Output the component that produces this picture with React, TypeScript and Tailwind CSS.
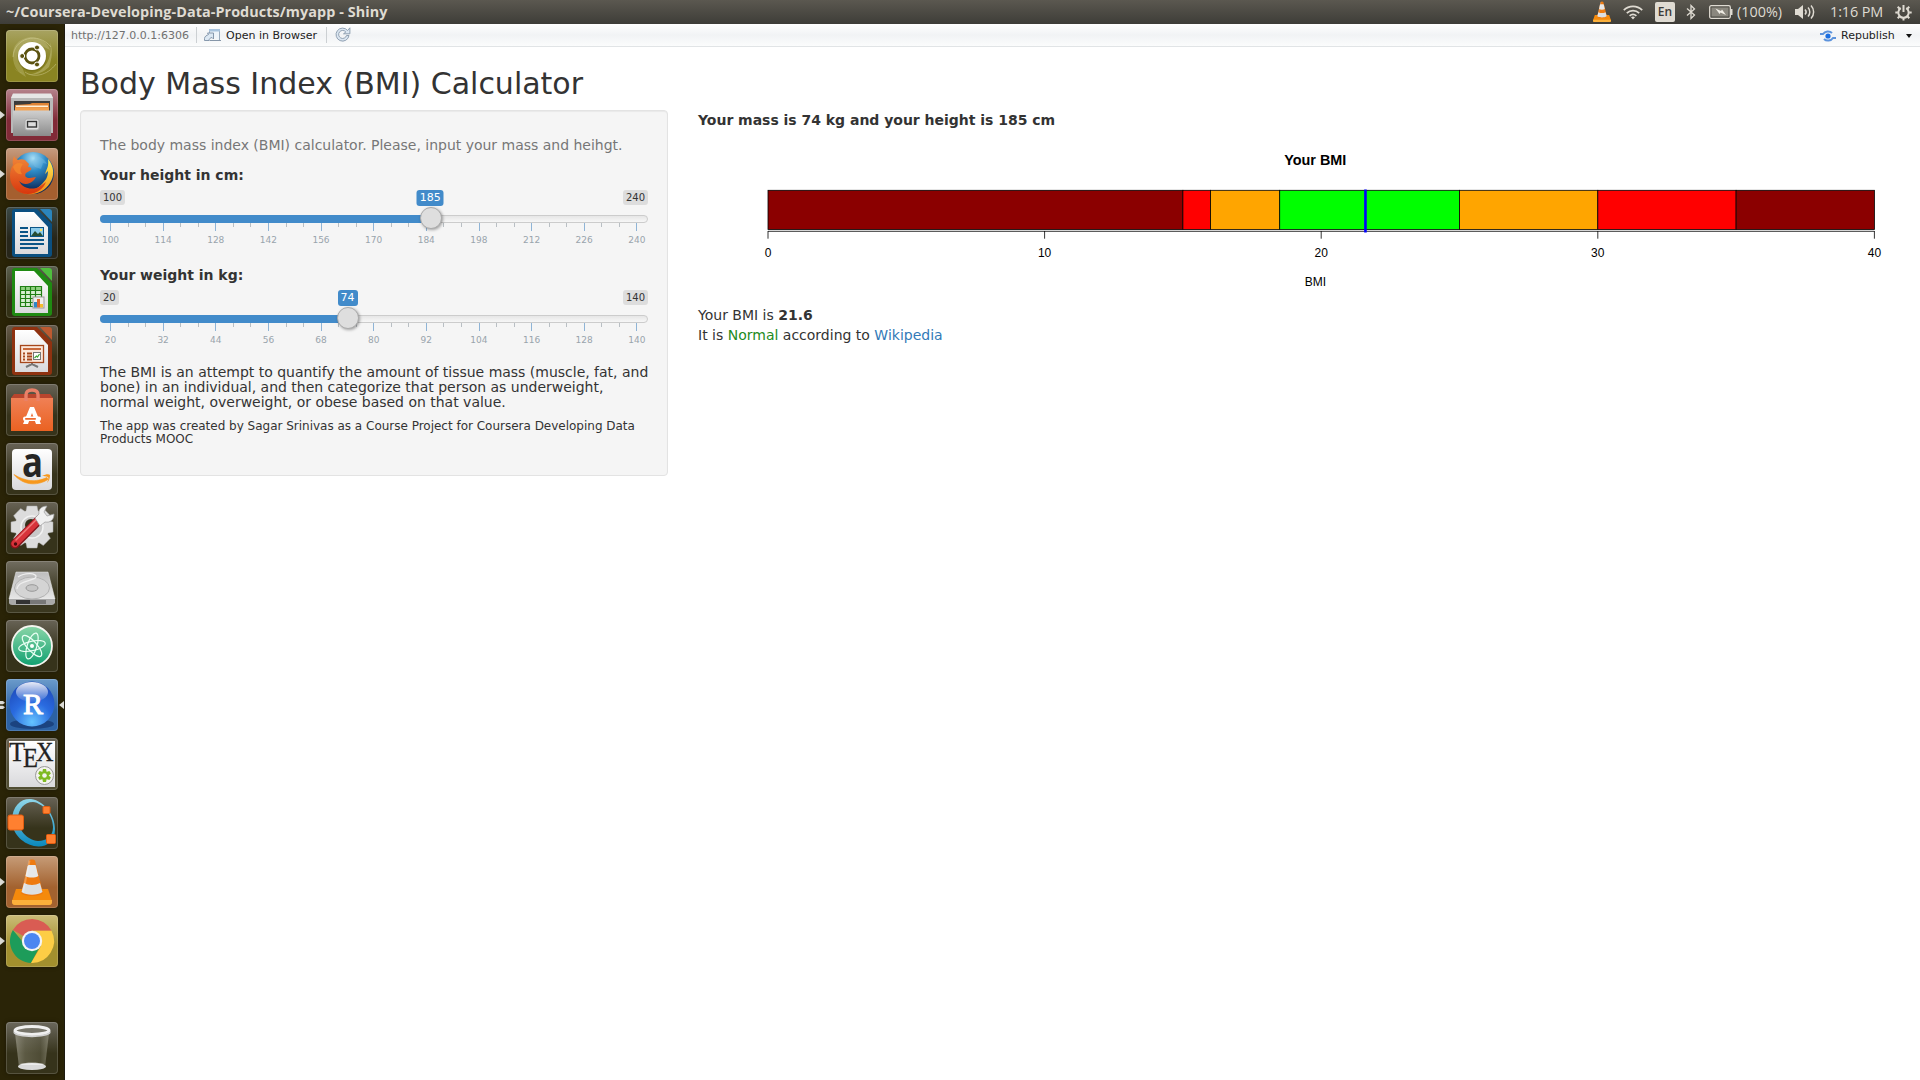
import type { ReactNode } from "react";

const tiles: { id: string; top: string; bottom: string; running?: boolean; active?: boolean; art: ReactNode }[] = [
  {
    id: "dash", top: "#a8a362", bottom: "#8a8422",
    art: (
      <>
        <path d="M7 27C8 8 32 1 45 17" stroke="#d9d59a" strokeOpacity=".5" strokeWidth="1" fill="none" />
        <path d="M7 27C6 16 12 9 24 7c10 0 18 6 20 13L26 11 12 27l8 20C12 43 7 36 7 27Z" fill="#d2ce96" fillOpacity=".3" />
        <path d="M44 12c3 14-4 29-18 32-7 1-14-1-18-6 8 8 24 10 35-1 3-8 4-17 1-25Z" fill="#e0dca8" fillOpacity=".35" />
        <path d="M19 42c8 6 22 4 31-8" stroke="#dcd8a0" strokeOpacity=".45" fill="none" />
        <circle cx="26" cy="27" r="14.5" fill="#5f5a12" fillOpacity=".35" />
        <circle cx="26" cy="26" r="14" fill="#fff" />
        <circle cx="26" cy="26" r="7" fill="none" stroke="#5b5210" strokeWidth="2.8" />
        <circle cx="16.2" cy="26" r="2.500" fill="#5b5210" stroke="#fff" strokeWidth="1" />
        <circle cx="31" cy="17.5" r="2.500" fill="#5b5210" stroke="#fff" strokeWidth="1" />
        <circle cx="31" cy="34.5" r="2.500" fill="#5b5210" stroke="#fff" strokeWidth="1" />
      </>
    ),
  },
  {
    id: "files", top: "#b5838c", bottom: "#812a37", running: true,
    art: (
      <>
        <path d="M7 5 45 5l2 4v35H5V9Z" fill="#b9b9b9" />
        <path d="M7 4.5h38l2 4.5H5Z" fill="#e6e6e6" />
        <rect x="8" y="12" width="36" height="12" fill="#3b3b3b" />
        <path d="M9 16l15-1 2-1h17v9H9Z" fill="#e08436" />
        <rect x="10" y="16.5" width="32" height="1.6" fill="#fff0d8" />
        <rect x="9" y="18.5" width="34" height="4" fill="#f3a150" />
        <rect x="7" y="21.5" width="38" height="25.5" fill="url(#steel)" />
        <rect x="19" y="30" width="14" height="11" rx="2" fill="#e3e3e3" stroke="#aaa" />
        <rect x="21.5" y="32.5" width="9" height="5.5" fill="#ddd" stroke="#333" strokeWidth="1.4" />
      </>
    ),
  },
  {
    id: "firefox", top: "#c69c80", bottom: "#a55f2f", running: true,
    art: (
      <>
        <circle cx="27" cy="25" r="21" fill="url(#foxglobe)" />
        <path d="M29 8c7 1 10 4 12 8l-4-1-2 6-6-2-3-5 3-3Z" fill="#7ec2e8" fillOpacity=".35" />
        <path d="M42 11c6 7 7 17 2 24-7 12-24 15-34 6 9 5 20 1 25-4 5-5 7-8 7-14l-3 3c2-6 4-8 3-15Z" fill="url(#foxtail)" />
        <path d="M8 8c1 2 2 3 4 4 2-1 5-1 7 0l4 4-1 3c3 0 4 1 3 3l-5 3c-2 3 0 5 4 5l6-1-2 3c-5 5-11 5-15 1 4 8 13 9 20 6l7-5c-2 6-9 12-18 12C11 46 4 38 4 28c0-5 1-8 3-11-1-3 0-6 1-9Z" fill="url(#fox)" />
        <path d="M7 19c2-4 6-5 10-3-2 3-4 6-1 10-4 1-7-2-9-7Z" fill="#f68b2c" fillOpacity=".7" />
      </>
    ),
  },
  { id: "writer", top: "#3c4a48", bottom: "#27261a", art: <OfficeDoc color="#0b4f80" fold="#2b85bd" kind="writer" /> },
  { id: "calc", top: "#5c6050", bottom: "#333116", art: <OfficeDoc color="#1f8a12" fold="#4fbe3e" kind="calc" /> },
  { id: "impress", top: "#665c4d", bottom: "#3a3218", art: <OfficeDoc color="#8f3210" fold="#bd5a30" kind="impress" /> },
  {
    id: "software", top: "#686356", bottom: "#36331b",
    art: (
      <>
        <path d="M5 14 8 10h36l3 4v5H5Z" fill="#b8452d" />
        <path d="M5 14h42v33H5Z" fill="url(#bag)" />
        <path d="M20 17v-6c0-3 2-5 6-5s6 2 6 5v6" fill="none" stroke="#e98168" strokeWidth="3.4" />
        <path d="m17 40 7-17h4l7 17h-5l-4-11-4 11Z" fill="#fff" />
        <rect x="17" y="32.5" width="18" height="4.6" rx="2" fill="#fff" />
        <rect x="19" y="34" width="11" height="1.8" rx=".8" fill="#ee6a2f" />
      </>
    ),
  },
  {
    id: "amazon", top: "#686356", bottom: "#36331b",
    art: (
      <>
        <rect x="6" y="6" width="40" height="41" rx="4" fill="url(#paper)" />
        <text x="16" y="33.500" textLength="21" lengthAdjust="spacingAndGlyphs" fontFamily="Open Sans, sans-serif" fontWeight="700" fontSize="41" fill="#252525">a</text>
        <path d="M8 31.500c11 7 22 8 33 3l1 2c-12 7.500-26 5-34-5Z" fill="#f7981d" stroke="#f7981d" strokeWidth=".6" />
        <path d="M36 33c4-2 7-2 8-1 0 3-1 6-3 8 1-3 2-5 1-6-2-1-4-1-6-1Z" fill="#f7981d" />
      </>
    ),
  },
  {
    id: "settings", top: "#686356", bottom: "#36331b",
    art: (
      <>
        <g fill="#dcdcdc" stroke="#aaa" strokeWidth=".5">
          {[0, 45, 90, 135, 180, 225, 270, 315].map((a) => (
            <path key={a} d="m21 4 10 0 1.5 7h-13Z" transform={`rotate(${a} 26 25)`} />
          ))}
          <circle cx="26" cy="25" r="17" stroke="none" />
        </g>
        <circle cx="26" cy="25" r="11" fill="#c8c8c8" stroke="#f2f2f2" strokeWidth="1.5" />
        <circle cx="25" cy="23" r="6" fill="#34301a" />
        <path d="M9 42 33 18" stroke="#86141a" strokeWidth="9" strokeLinecap="round" />
        <path d="M9 41.500 32.500 18" stroke="#d7323a" strokeWidth="7" strokeLinecap="round" />
        <path d="M10 38 31 17" stroke="#f07c7c" strokeWidth="1.5" strokeLinecap="round" />
        <circle cx="9.500" cy="42" r="1.700" fill="#4a0a0d" />
        <path d="M29 16l4-4c-1-5 3-8 8-8l-3 6 3 4 7-2c0 6-4 9-9 8l-5 4Z" fill="#f0f0f0" stroke="#9b9b9b" strokeWidth=".7" />
      </>
    ),
  },
  {
    id: "disk", top: "#716d60", bottom: "#3a371f",
    art: (
      <>
        <path d="M10 11h32l7 27H3Z" fill="url(#disk)" stroke="#eee" strokeWidth=".5" />
        <path d="M3 38h46v4c-1 1-2 2-3 2H6c-1 0-3-1-3-2Z" fill="#a9a9a9" />
        <rect x="10" y="39" width="30" height="4" fill="#333" />
        <rect x="24" y="39" width="16" height="4" fill="#777" />
        <ellipse cx="26" cy="27" rx="17.500" ry="11" fill="#d4d4d4" stroke="#b2b2b2" />
        <path d="M12 16c7-5 19-4 18 0s-18 3-19 12" fill="none" stroke="#eee" strokeWidth="1.2" />
        <ellipse cx="26" cy="27" rx="6" ry="3.300" fill="#c5c5c5" stroke="#999" />
      </>
    ),
  },
  {
    id: "atom", top: "#686356", bottom: "#36331b",
    art: (
      <>
        <circle cx="26" cy="26" r="20" fill="url(#atom)" stroke="#f5f5f0" strokeWidth="1.8" />
        <g fill="none" stroke="#e8fff3" strokeWidth="1.2">
          <ellipse cx="26" cy="26" rx="13.500" ry="4.800" transform="rotate(-12 26 26)" />
          <ellipse cx="26" cy="26" rx="13.500" ry="4.800" transform="rotate(48 26 26)" />
          <ellipse cx="26" cy="26" rx="13.500" ry="4.800" transform="rotate(108 26 26)" />
        </g>
        <circle cx="26" cy="26" r="2" fill="#fff" />
      </>
    ),
  },
  {
    id: "rstudio", top: "#6b9bcb", bottom: "#2c62a4", running: true, active: true,
    art: (
      <>
        <ellipse cx="26" cy="45" rx="22" ry="5" fill="#163a73" fillOpacity=".75" />
        <circle cx="26" cy="25" r="22.500" fill="url(#rball)" />
        <ellipse cx="26" cy="13" rx="16" ry="10" fill="url(#shine)" />
        <text x="27" y="34.500" textAnchor="middle" fontFamily="Liberation Serif, serif" fontWeight="400" stroke="#fff" strokeWidth=".9" fontSize="30" fill="#fff">R</text>
      </>
    ),
  },
  {
    id: "tex", top: "#686356", bottom: "#514e34",
    art: (
      <>
        <rect x="3" y="3" width="46" height="46" fill="url(#paper)" />
        <g fontFamily="Liberation Serif, serif" fill="#222" stroke="#222" strokeWidth=".3">
          <text x="3" y="22.500" fontSize="27" textLength="16" lengthAdjust="spacingAndGlyphs">T</text>
          <text x="17" y="28.500" fontSize="27" textLength="15" lengthAdjust="spacingAndGlyphs">E</text>
          <text x="30" y="22.500" fontSize="27" textLength="17.500" lengthAdjust="spacingAndGlyphs">X</text>
        </g>
        <circle cx="38.500" cy="37.500" r="9" fill="#f3f3ee" stroke="#999" />
        <g fill="#7fba22">
          {[0, 60, 120].map((a) => (
            <path key={a} d="M37 31h3l1.500 6.500L40 44h-3l-1.500-6.500Z" transform={`rotate(${a} 38.500 37.500)`} />
          ))}
        </g>
        <circle cx="38.500" cy="37.500" r="2.300" fill="#f3f3ee" />
      </>
    ),
  },
  {
    id: "octave", top: "#686356", bottom: "#36331b",
    art: (
      <>
        <path fillRule="evenodd" d="M6 24C6 8 16 1 25 2c14 2 24 17 24 30 0 14-10 19-21 17C15 46 6 35 6 24Zm6-4c-1 12 9 23 20 24 9 0 15-5 15-14C47 18 37 6 27 5 18 5 13 12 12 20Z" fill="url(#octave)" />
        <rect x="2" y="18" width="15.500" height="15" rx="2" fill="#ff8030" stroke="#e25c10" />
        <rect x="37" y="9.500" width="7" height="7" rx="1" fill="#ff8030" stroke="#e25c10" />
        <rect x="40.500" y="37.500" width="9" height="9" rx="1" fill="#ff8030" stroke="#e25c10" />
      </>
    ),
  },
  { id: "vlc", top: "#c69c78", bottom: "#a3622f", running: true, art: <Cone /> },
  {
    id: "chrome", top: "#cbbd78", bottom: "#a3902e", running: true,
    art: (
      <>
        <path d="M26 26 6.900 15A22 22 0 0 1 45.500 15.800L26 15.800Z" fill="#d95c53" />
        <path d="M26 26h-10L6.900 15A22 22 0 0 0 25 48l9-17Z" fill="#1d9c5a" />
        <path d="M26 15.800h19.500A22 22 0 0 1 25 48l10-17Z" fill="#fdcd45" />
        <circle cx="26" cy="26" r="10.200" fill="#f4f4f4" />
        <circle cx="26" cy="26" r="8" fill="#4c86f0" />
      </>
    ),
  },
];

function OfficeDoc({ color, fold, kind }: { color: string; fold: string; kind: "writer" | "calc" | "impress" }) {
  return (
    <>
      <path d="M9 2h22l15 15v30a3 3 0 0 1-3 3H9a3 3 0 0 1-3-3V5a3 3 0 0 1 3-3Z" fill={color} />
      <path d="M34 2h9a3 3 0 0 1 3 3v10Z" fill={fold} />
      <path d="M9 5h19l14 15v27H9Z" fill="url(#paper)" />
      {kind === "writer" && (
        <>
          <g fill="#0b5587">
            <rect x="14" y="20" width="8" height="2" /><rect x="14" y="24" width="8" height="2" /><rect x="14" y="28" width="8" height="2" />
            <rect x="14" y="32" width="24" height="2" /><rect x="14" y="36" width="24" height="2" /><rect x="14" y="40" width="18" height="2" />
            <rect x="24" y="20" width="14" height="10" />
          </g>
          <rect x="25" y="21" width="12" height="8" fill="#8ccbea" />
          <path d="m25 29 4-5 3 3 2-2 3 4Z" fill="#274d33" />
          <circle cx="35" cy="23" r="1.200" fill="#ffe05a" />
        </>
      )}
      {kind === "calc" && (
        <>
          <rect x="14" y="20" width="22" height="21" fill="#d8efd2" />
          <path d="M14 20h22v4H14Z" fill="#8fd080" />
          <path d="M14.500 20.500h21v20h-21Zm0 4h21m-21 4h21m-21 4h21m-21 4h21M19.500 20v21m5-21v21m5-21v21" fill="none" stroke="#1f7f14" strokeWidth="1.200" />
          <rect x="27" y="31" width="11" height="11" fill="#eee" stroke="#999" />
          <rect x="28" y="36" width="3" height="5.500" fill="#2e86c8" /><rect x="31" y="33" width="3" height="8.500" fill="#e0662d" /><rect x="34" y="38" width="3" height="3.500" fill="#f4bd2f" />
        </>
      )}
      {kind === "impress" && (
        <>
          <path d="m20 42 6-3 6 3m-6-4v2" fill="none" stroke="#777" strokeWidth="2" />
          <rect x="14.500" y="20.500" width="23" height="17" fill="#fbe7da" stroke="#a6471c" strokeWidth="1.300" />
          <rect x="17" y="23" width="18" height="2" fill="#c8693c" />
          <path d="M17 28.500h2m-2 3h2m-2 3h2m2-6h5m-5 3h5m-5 3h5" stroke="#a6471c" strokeWidth="1.800" />
          <rect x="27.500" y="27.500" width="7" height="7" fill="#fff" stroke="#777" />
          <path d="m28.500 33 2-2 1 1 2-3" fill="none" stroke="#3fa535" strokeWidth="1.200" />
        </>
      )}
    </>
  );
}

function Cone() {
  return (
    <>
      <path d="M10 33h32l4 12c0 2-1 4-3 4H9c-2 0-3-2-3-4Z" fill="#f58a0c" />
      <path d="M6 44h40v2c0 2-1 3-3 3H9c-2 0-3-1-3-3Z" fill="#fbb03b" />
      <path d="M23 4.500c1-1.500 5-1.500 6 0L37 37c-3 4-19 4-22 0Z" fill="#ee7a10" />
      <path d="m21.500 10.500 1-1.500h7l.5 1.500 2.300 9.500c-3 2-10 2-12.800 0Z" fill="#e6e8ea" />
      <path d="m18 27c5 2.500 11 2.500 16 0l2.500 9c-5 3.500-16 3.500-21 0Z" fill="#dcdfe2" />
      <path d="M23.500 4.500 17 36" stroke="#fff" strokeOpacity=".25" strokeWidth="2" />
    </>
  );
}

function Defs() {
  const lin: [string, string, string][] = [
    ["steel", "#d0d0d0", "#8b8b8b"], ["foxtail", "#fff05a", "#f08a14"], ["fox", "#f0873a", "#d8370d"],
    ["bag", "#f08055", "#ea6222"], ["paper", "#ffffff", "#d9d9dc"], ["disk", "#bdbdbd", "#e6e6e6"],
    ["atom", "#8ad6a8", "#10a070"], ["octave", "#8fd6ea", "#0a88bd"],
  ];
  return (
    <svg width="0" height="0" className="absolute">
      <defs>
        {lin.map(([id, a, b]) => (
          <linearGradient key={id} id={id} x1="0" y1="0" x2="0" y2="1">
            <stop offset="0" stopColor={a} /><stop offset="1" stopColor={b} />
          </linearGradient>
        ))}
        <linearGradient id="shine" x1="0" y1="0" x2="0" y2="1">
          <stop offset="0" stopColor="#fff" stopOpacity=".9" /><stop offset="1" stopColor="#fff" stopOpacity=".05" />
        </linearGradient>
        <linearGradient id="glass" x1="0" y1="0" x2="1" y2="0">
          <stop offset="0" stopColor="#b9b7a8" stopOpacity=".55" /><stop offset=".3" stopColor="#8a8874" stopOpacity=".45" />
          <stop offset=".75" stopColor="#6c6a55" stopOpacity=".45" /><stop offset="1" stopColor="#aaa896" stopOpacity=".55" />
        </linearGradient>
        <radialGradient id="foxglobe" cx=".5" cy=".15" r=".75">
          <stop offset="0" stopColor="#a8def5" /><stop offset=".4" stopColor="#2f8cc8" /><stop offset="1" stopColor="#0c2c5c" />
        </radialGradient>
        <radialGradient id="rball" cx=".5" cy=".9" r=".9">
          <stop offset="0" stopColor="#64c4ff" /><stop offset=".5" stopColor="#2a6be0" /><stop offset="1" stopColor="#1d49b8" />
        </radialGradient>
      </defs>
    </svg>
  );
}

function Tile({ top, bottom, children }: { top: string; bottom: string; children: ReactNode }) {
  return (
    <div
      className="size-[52px] overflow-hidden rounded-[4px] shadow-[inset_0_0_0_1px_rgba(255,255,255,0.16),0_0_4px_rgba(0,0,0,0.35)]"
      style={{ backgroundImage: `linear-gradient(${top}, ${bottom} 60%, ${bottom})` }}
    >
      <svg width="52" height="52" viewBox="0 0 52 52">{children}</svg>
    </div>
  );
}

function Launcher() {
  return (
    <nav className="flex w-[65px] shrink-0 flex-col justify-between border-r border-[#1d1a10] bg-[#2a2407] pt-[6px] pb-[6px]">
      <div className="flex flex-col gap-[7px]">
        {tiles.map((t) => (
          <div key={t.id} className="flex h-[52px] items-center">
            <span className="flex w-[6px] shrink-0 items-center">
              {t.running && !t.active && <svg width="5" height="8" viewBox="0 0 5 8"><path d="M0 0 5 4 0 8Z" fill="#dcdcd6" /></svg>}
              {t.active && <svg width="5" height="8" viewBox="0 0 5 8"><path d="M0 0h3l2 1.700-2 1.600H0Zm0 4.700h3l2 1.600L3 8H0Z" fill="#dcdcd6" /></svg>}
            </span>
            <Tile top={t.top} bottom={t.bottom}>{t.art}</Tile>
            {t.active && <svg className="ml-[1px]" width="5" height="8" viewBox="0 0 5 8"><path d="M5 0 0 4l5 4Z" fill="#dcdcd6" /></svg>}
          </div>
        ))}
      </div>
      <div className="pl-[6px]">
        <Tile top="#6b685d" bottom="#36331b">
          <path d="M9 11h34l-4 34c-1 4-25 4-26 0Z" fill="url(#glass)" />
          <ellipse cx="26" cy="44.500" rx="14" ry="3.500" fill="#d9d9d9" />
          <path d="M14 42c6-2 18-2 24 0l-1 1H15Z" fill="#fff" fillOpacity=".5" />
          <ellipse cx="26" cy="8.500" rx="17" ry="4" fill="#77756a" stroke="#efefef" strokeWidth="3" />
          <path d="M7.500 9c3 6 34 6 37 0v2c-3 5.500-34 5.500-37 0Z" fill="#d2d2d2" />
        </Tile>
      </div>
    </nav>
  );
}

function TopBar() {
  return (
    <header className="flex h-6 shrink-0 items-center justify-between bg-linear-to-b from-[#5b5850] to-[#3e3d38] pr-2 pl-[6px] font-['Open_Sans','Noto_Sans',sans-serif] text-[15px] text-[#dfdbd2]">
      <span className="text-[14.4px] leading-6 font-bold tracking-[0.07px] whitespace-nowrap">~/Coursera-Developing-Data-Products/myapp - Shiny</span>
      <div className="flex h-6 items-center">
        <svg width="20" height="22" viewBox="4 2 44 49"><Cone /></svg>
        <svg className="ml-[11px]" width="20" height="15" viewBox="0 0 20 15" fill="none" stroke="#dfdbd2" strokeWidth="1.700">
          <path d="M.8 5.200c5-5 13.400-5 18.400 0M3.800 8.200c3.400-3.400 9-3.400 12.400 0M6.600 10.900c2-1.900 4.800-1.900 6.800 0" />
          <path d="m10 14.500-2-2.300c1-.9 3-.9 4 0Z" fill="#dfdbd2" stroke="none" />
        </svg>
        <span className="ml-[12px] flex size-5 items-center justify-center rounded-[2px] bg-[#dfdbd2] text-[12px] leading-5 font-semibold text-[#3c3b37]">En</span>
        <svg className="ml-[11px]" width="10" height="16" viewBox="0 0 10 16" fill="none" stroke="#dfdbd2" strokeWidth="1.300">
          <path d="M1 4.500 8.500 11 5 14.500V1.500L8.500 5 1 11.500" />
        </svg>
        <svg className="ml-[13px]" width="24" height="14" viewBox="0 0 24 14">
          <rect x=".7" y=".7" width="20.600" height="12.600" rx="1.500" fill="none" stroke="#dfdbd2" strokeWidth="1.300" />
          <rect x="2.500" y="2.500" width="17" height="9" fill="#8a877e" />
          <path d="M21.500 4h2v6h-2Z" fill="#dfdbd2" />
          <path d="m6.500 3.500 5.500 2.500 1-1.500 4 5.500-5.500-2.500-1 1.500Z" fill="#efece4" />
        </svg>
        <span className="ml-[4px] w-[46px] text-[14.400px] leading-6 whitespace-nowrap">(100%)</span>
        <svg className="ml-[12px]" width="21" height="16" viewBox="0 0 21 16" fill="none" stroke="#dfdbd2" strokeWidth="1.500">
          <path d="M0 5h3l5-4v14l-5-4H0Z" fill="#dfdbd2" stroke="none" />
          <path d="M10 5.500c1.400 1.500 1.400 3.500 0 5M13 3.500c2.400 2.500 2.400 6.500 0 9M16 1.500c3.500 3.700 3.500 9.300 0 13" />
        </svg>
        <span className="ml-[14px] w-[53px] text-[14.400px] leading-6 tracking-[-0.100px] whitespace-nowrap">1:16 PM</span>
        <svg className="ml-[12px]" width="17" height="17" viewBox="0 0 17 17" fill="none" stroke="#dfdbd2">
          <path d="M5.800 4.200a5.200 5.200 0 1 0 5.400 0" strokeWidth="2" />
          <path d="M8.500 1v7" strokeWidth="2" />
          <path d="M.3 8.500h2.500m11.400 0h2.500M2.700 2.700l2 2m9.600-2-2 2M2.700 14.300l2-2m9.600 2-2-2M8.500 14v2.500" strokeWidth="2" />
        </svg>
      </div>
    </header>
  );
}

function Toolbar() {
  return (
    <div className="flex h-[23px] items-center border-b border-[#e1e4e6] bg-linear-to-b from-[#fff] via-[#f1f3f5] to-[#fbfcfc] pl-[6px] text-[11px] leading-[20px] text-[#222]">
      <span className="w-[118px] pt-[2px] whitespace-nowrap text-[#707070]">http://127.0.0.1:6306</span>
      <span className="ml-[7px] h-4 w-px bg-[#ccd0d3]" />
      <svg className="ml-[7px]" width="17" height="14" viewBox="0 0 17 14">
        <path d="M5.500 5V1.500h10v11" fill="#eef4fa" stroke="#9aabbd" />
        <path d="M5 1h11v2.500H5Z" fill="#a9c4de" />
        <path d="M5.500 12.500h11.500" stroke="#8696a8" />
        <path d="M.5 12.500v-2c0-2 2-3 4-4L3.500 5h6v6L8 9.500c-2 .5-3 1.500-3 3Z" fill="#dce8f3" stroke="#7c8fa5" strokeWidth=".9" />
      </svg>
      <span className="ml-[5px] w-[93px] pt-[2px] whitespace-nowrap">Open in Browser</span>
      <span className="ml-[7px] h-4 w-px bg-[#ccd0d3]" />
      <svg className="ml-[8px]" width="16" height="16" viewBox="0 0 16 16">
        <path d="M12.600 3.500A6.500 6.500 0 1 0 14 8.500h-2.500A4 4 0 1 1 10.800 5L8.500 6.800h6.400V.8Z" fill="#dbe6f1" stroke="#8798ac" strokeWidth=".9" />
      </svg>
      <div className="ml-auto flex items-center pt-[2px] pr-[8px]">
        <svg width="16" height="12" viewBox="0 0 16 12">
          <circle cx="8" cy="6" r="2.600" fill="#1c6fe0" />
          <path d="M0 4h3C5 1 9.500 .5 12 3M16 8h-3C11 11 6.500 11.500 4 9" fill="none" stroke="#5c93dc" strokeWidth="2" />
        </svg>
        <span className="ml-[5px] w-[54px] whitespace-nowrap">Republish</span>
        <svg className="ml-[11px]" width="6" height="4" viewBox="0 0 6 4"><path d="M0 0h6L3 4Z" fill="#111" /></svg>
      </div>
    </div>
  );
}

function Slider({ label, min, max, step, value }: { label: string; min: number; max: number; step: number; value: number }) {
  const at = 11.2 + ((value - min) / (max - min)) * 526.3;
  const ticks = Array.from({ length: 31 }, (_, i) => i);
  return (
    <div className="mb-[15px] h-[85px]">
      <p className="mb-[5px] font-bold tracking-[-0.020px]">{label}</p>
      <div className="relative h-[60px]">
        <div className="flex justify-between text-[10px] leading-[13px] text-[#333]">
          <span className="rounded-[3px] bg-[#dddddd] px-[3px] pt-px pb-px">{min}</span>
          <span className="rounded-[3px] bg-[#dddddd] px-[3px] pt-px pb-px">{max}</span>
        </div>
        <div className="mt-[10px] h-2 overflow-hidden rounded-[8px] border border-[#ccc] bg-linear-to-b from-[#dedede] from-[-50%] to-[#fff] to-150%" />
        <svg className="block" width="548" height="24" viewBox="0 0 548 24">
          {ticks.map((i) => (
            <rect key={i} x={Math.floor(10.6 + i * 17.543)} y="0" width="1" height={i % 3 ? 4 : 8} fill={i % 3 ? "#b9bfc4" : "#8fb4d6"} />
          ))}
          {ticks.filter((i) => i % 3 === 0).map((i) => (
            <text key={i} x={10.5 + i * 17.543} y="20" textAnchor="middle" fontSize="9" fill="#99a4ac">{min + (i / 3) * step}</text>
          ))}
        </svg>
        <div className="absolute top-[25px] left-0 h-2 rounded-l-[8px] bg-[#428bca]" style={{ width: at }} />
        <span className="absolute top-0 -translate-x-1/2 rounded-[3px] bg-[#428bca] px-[3px] py-px text-[11px] leading-[14px] text-white" style={{ left: at - 0.5 }}>{value}</span>
        <span className="absolute top-[17px] size-[22px] -translate-x-1/2 rounded-full border border-[#ababab] bg-[#dedede] shadow-[1px_1px_3px_rgba(0,0,0,0.35)]" style={{ left: at }} />
      </div>
    </div>
  );
}

const bands = [
  { from: 0, to: 15, fill: "#8b0000" },
  { from: 15, to: 16, fill: "#ff0000" },
  { from: 16, to: 18.5, fill: "#ffa500" },
  { from: 18.5, to: 25, fill: "#00ff00" },
  { from: 25, to: 30, fill: "#ffa500" },
  { from: 30, to: 35, fill: "#ff0000" },
  { from: 35, to: 40, fill: "#8b0000" },
];

function BmiChart() {
  const x = (v: number) => 70 + v * 27.66;
  return (
    <svg className="block font-['Liberation_Sans',Arial,sans-serif]" width="1207" height="175" viewBox="0 0 1207 175">
      <text x="617.300" y="35" textAnchor="middle" fontSize="14.400" fontWeight="700" fill="#000">Your BMI</text>
      {bands.map((b) => (
        <rect key={b.from} x={x(b.from)} y="60.300" width={x(b.to) - x(b.from)} height="39.200" fill={b.fill} stroke="#000" strokeWidth=".8" />
      ))}
      <path d={`M${x(0)} 101.300H${x(40)}`} stroke="#000" strokeWidth=".8" />
      {[0, 10, 20, 30, 40].map((v) => (
        <g key={v}>
          <path d={`M${x(v)} 101v7.700`} stroke="#000" strokeWidth=".8" />
          <text x={x(v)} y="127" textAnchor="middle" fontSize="12" fill="#000">{v}</text>
        </g>
      ))}
      <path d={`M${x(21.6)} 59.500v43`} stroke="#0000ff" strokeWidth="2.600" />
      <text x="617.500" y="156" textAnchor="middle" fontSize="12" fill="#000">BMI</text>
    </svg>
  );
}

export default function App() {
  return (
    <div className="flex h-screen w-screen flex-col overflow-hidden bg-white font-['DejaVu_Sans',sans-serif] text-[14px] leading-5 text-[#333]">
      <Defs />
      <TopBar />
      <div className="flex min-h-0 flex-1">
        <Launcher />
        <main className="flex-1">
          <Toolbar />
          <div className="px-[15px] pt-5">
            <h2 className="mb-[10px] text-[30px] leading-[33px]">Body Mass Index (BMI) Calculator</h2>
            <div className="flex gap-[30px]">
              <section className="h-[366px] w-[588px] shrink-0 rounded-[4px] border border-[#e3e3e3] bg-[#f5f5f5] px-[19px] pt-[24px] shadow-[inset_0_1px_1px_rgba(0,0,0,0.05)]">
                <p className="mb-[10px] whitespace-nowrap tracking-[-0.010px] text-[#777]">The body mass index (BMI) calculator. Please, input your mass and heihgt.</p>
                <Slider label="Your height in cm:" min={100} max={240} step={14} value={185} />
                <Slider label="Your weight in kg:" min={20} max={140} step={12} value={74} />
                <p className="leading-[15px] tracking-[-0.010px] whitespace-nowrap">
                  The BMI is an attempt to quantify the amount of tissue mass (muscle, fat, and<br />
                  bone) in an individual, and then categorize that person as underweight,<br />
                  normal weight, overweight, or obese based on that value.
                </p>
                <p className="mt-[10px] text-[12px] leading-[13px] tracking-[-0.010px] whitespace-nowrap">
                  The app was created by Sagar Srinivas as a Course Project for Coursera Developing Data<br />
                  Products MOOC
                </p>
              </section>
              <section>
                <p className="font-bold tracking-[-0.020px]">Your mass is 74 kg and your height is 185 cm</p>
                <BmiChart />
                <p>Your BMI is <b>21.6</b></p>
                <p>It is <span className="text-[#228b22]">Normal</span> according to <a className="text-[#337ab7]">Wikipedia</a></p>
              </section>
            </div>
          </div>
        </main>
      </div>
    </div>
  );
}
